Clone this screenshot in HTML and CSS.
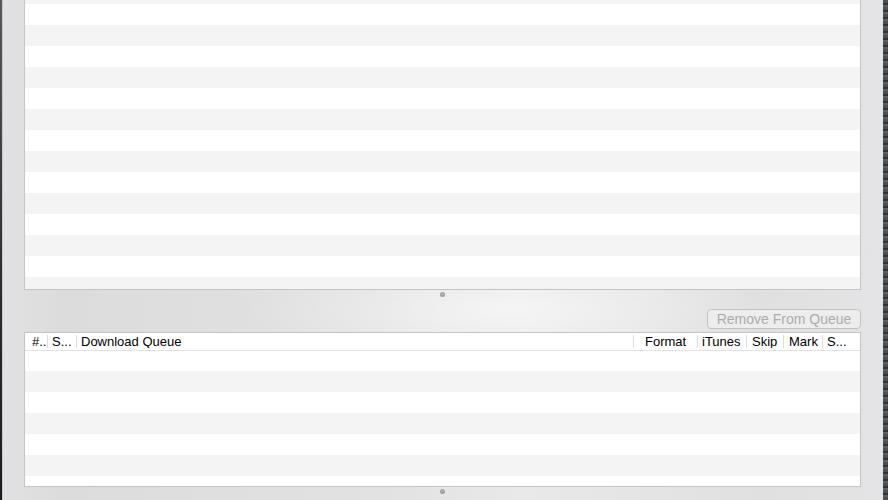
FILE: index.html
```html
<!DOCTYPE html>
<html>
<head>
<meta charset="utf-8">
<link rel="stylesheet" href="styles.css">
</head>
<body>
<div class="screen">
  <div class="desk desk-left"></div>
  <div class="window">
    <div class="table-top"></div>
    <div class="splitter"><span class="dot"></span></div>
    <div class="actions">
      <button class="btn" disabled>Remove From Queue</button>
    </div>
    <div class="table-queue">
      <div class="header">
        <div class="col c1">#..</div>
        <div class="col c2">S...</div>
        <div class="col c3">Download Queue</div>
        <div class="col c4">Format</div>
        <div class="col c5">iTunes</div>
        <div class="col c6">Skip</div>
        <div class="col c7">Mark</div>
        <div class="col c8">S...</div>
      </div>
      <div class="rows"></div>
    </div>
    <div class="splitter bottom"><span class="dot"></span></div>
  </div>
  <div class="desk desk-right"></div>
</div>
</body>
</html>
```

FILE: styles.css
```css
html, body {
  margin: 0;
  padding: 0;
  height: 100%;
  overflow: hidden;
}
body {
  font-family: "Liberation Sans", Arial, sans-serif;
  font-size: 13px;
  color: #000;
}
.screen {
  display: flex;
  width: 888px;
  height: 500px;
}
.desk {
  flex: none;
  background: #3b3d42;
}
.desk-left {
  width: 2px;
  background: linear-gradient(to bottom, #55585e, #2a2b2e 60%, #1c1c1c);
}
.desk-right {
  width: 5px;
  background: repeating-linear-gradient(to bottom, #4a4e55 0 3px, #2f3237 3px 5px, #5b5f66 5px 7px);
}
.window {
  flex: 1;
  display: flex;
  flex-direction: column;
  padding: 0 22px 0 21px;
  border-left: 1px solid #c9c9cc;
  background:
    radial-gradient(ellipse 260px 60px at 500px 310px, rgba(255,255,255,0.55), rgba(255,255,255,0)),
    linear-gradient(to right, #e1e1e3 0, #dcdcdc 60px, #e2e2e2 380px, #e9e9ea 520px, #e0e0e0 760px, #e4e4e6 100%);
}
.table-top {
  flex: none;
  height: 289px;
  border-left: 1px solid #c4c4c4;
  border-right: 1px solid #c4c4c4;
  border-bottom: 1px solid #c4c4c4;
  background: repeating-linear-gradient(to bottom, #ffffff 0 21px, #f4f4f4 21px 42px);
  background-position: 0 4px;
}
.splitter {
  flex: none;
  height: 10px;
  display: flex;
  justify-content: center;
  align-items: flex-start;
}
.splitter.bottom {
  flex: 1;
}
.dot {
  width: 5px;
  height: 5px;
  margin-top: 2px;
  border-radius: 50%;
  background: radial-gradient(circle at 50% 40%, #b8b8b8 0, #9c9c9c 60%, #8e8e8e 100%);
}
.actions {
  flex: none;
  display: flex;
  justify-content: flex-end;
  margin-top: 9px;
  margin-bottom: 3px;
}
.btn {
  height: 20px;
  width: 154px;
  padding: 0 6px;
  border: 1px solid #c2c2c2;
  border-radius: 4px;
  background: #ededed;
  color: #acacac;
  font-family: "Liberation Sans", Arial, sans-serif;
  font-size: 14px;
  line-height: 18px;
  text-align: center;
}
.table-queue {
  flex: none;
  border: 1px solid #c4c4c4;
  background: #fff;
}
.header {
  display: flex;
  height: 17px;
  border-bottom: 1px solid #e2e2e2;
  background: #fff;
  align-items: center;
}
.col {
  flex: none;
  box-sizing: border-box;
  height: 13px;
  line-height: 13px;
  border-right: 1px solid #dcdcdc;
  white-space: nowrap;
  overflow: hidden;
  padding-left: 4px;
}
.c1 { width: 23px; padding-left: 7px; }
.c2 { width: 29px; }
.c3 { width: 557px; }
.c4 { width: 64px; padding-left: 11px; }
.c5 { width: 49px; }
.c6 { width: 37px; padding-left: 5px; }
.c7 { width: 39px; padding-left: 5px; }
.c8 { flex: 1; border-right: none; }
.rows {
  height: 135px;
  background: repeating-linear-gradient(to bottom, #ffffff 0 21px, #f4f4f4 21px 42px);
  background-position: 0 -1px;
}
```
